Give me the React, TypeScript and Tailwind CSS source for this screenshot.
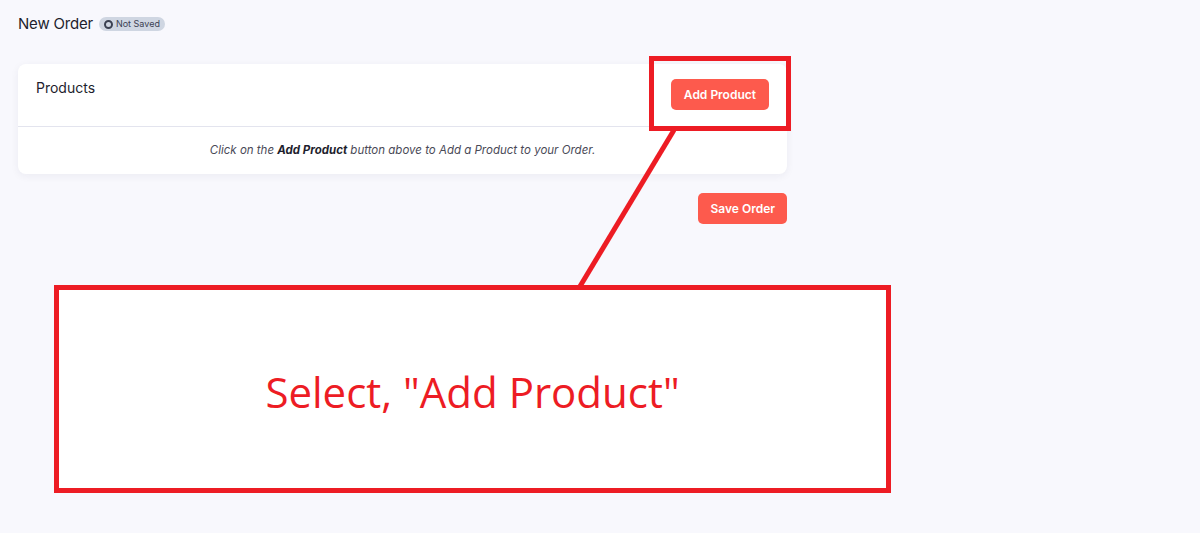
import React from 'react';

const Annotation = () => {
  return (
    <div className="pointer-events-none absolute inset-0">
      <div className="absolute left-[649px] top-[56px] h-[75px] w-[142px] border-[5px] border-[#ed1c24]" />
      <svg className="absolute left-0 top-0" width="1200" height="533">
        <line x1="674" y1="130" x2="579" y2="288" stroke="#ed1c24" strokeWidth="5" />
      </svg>
      <div className="absolute left-[54px] top-[285px] flex h-[208px] w-[837px] items-center justify-center border-[5px] border-[#ed1c24] bg-white">
        <span className="pt-[6px] text-[42px] leading-none text-[#ed1c24] [font-family:'Open_Sans',sans-serif]">
          Select, "Add Product"
        </span>
      </div>
    </div>
  );
};

const App = () => {
  return (
    <div className="relative min-h-screen bg-[#f8f8fd] text-[#1e1e2d] [font-family:Inter,sans-serif]">
      <div className="w-[805px] px-[18px] pt-[14px]">
        <div className="flex h-[20px] items-center gap-[6px]">
          <h1 className="text-[15px] font-normal tracking-[-0.2px]">New Order</h1>
          <span className="flex h-[14px] items-center gap-[3px] rounded-full bg-[#cfd6e2] px-[5px] text-[9px] text-[#3b4152]">
            <span className="h-[9px] w-[9px] rounded-full border-[2px] border-[#3b4152]" />
            Not Saved
          </span>
        </div>

        <div className="mt-[30px] rounded-lg bg-white shadow-[0_2px_8px_rgba(30,30,60,0.06)]">
          <div className="flex h-[62px] items-start justify-between px-[18px] pt-[14px]">
            <h2 className="text-[14px] leading-[20px] font-normal">Products</h2>
            <button className="mt-[1px] h-[31px] rounded-[5px] bg-[#fd5a4d] px-[13px] text-[12px] font-semibold text-white">
              Add Product
            </button>
          </div>
          <div className="flex h-[48px] items-center justify-center border-t border-[#e3e4ee] text-[11.5px] text-[#4a4a57] italic">
            <p>
              Click on the <b className="font-bold text-[#1e1e2d]">Add Product</b> button above to Add a Product to your Order.
            </p>
          </div>
        </div>

        <div className="mt-[19px] flex justify-end">
          <button className="h-[31px] rounded-[5px] bg-[#fd5a4d] px-[12px] text-[12px] font-semibold text-white">
            Save Order
          </button>
        </div>
      </div>

      <Annotation />
    </div>
  );
};

export default App;
